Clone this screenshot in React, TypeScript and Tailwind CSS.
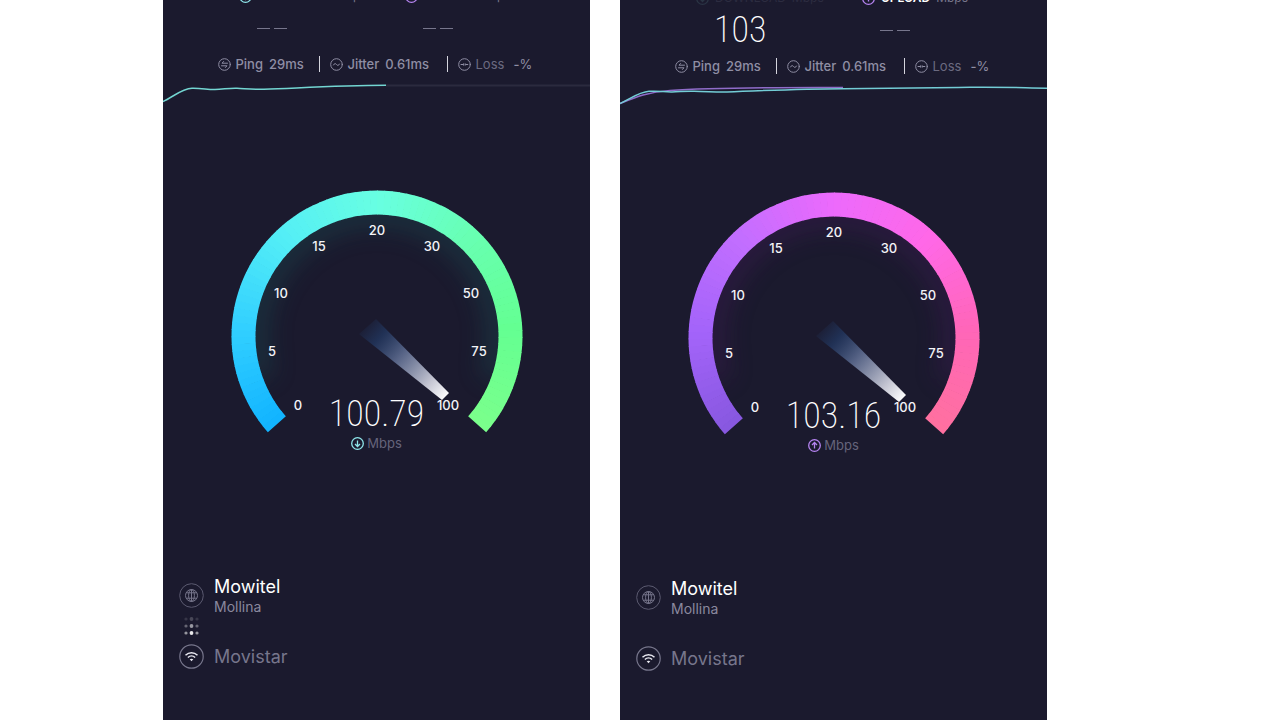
import { useId } from "react";

type Direction = "download" | "upload";

type Test = {
  direction: Direction;
  speed: string;
  download: string | null;
  colors: [number, number, number][];
  glow: string;
  accent: string;
  connecting: boolean;
};

const tests: Test[] = [
  {
    direction: "download",
    speed: "100.79",
    download: null,
    colors: [
      [18, 180, 255],
      [50, 208, 255],
      [84, 238, 246],
      [104, 255, 226],
      [104, 255, 178],
      [100, 255, 146],
      [122, 255, 140],
    ],
    glow: "#1f5a5c",
    accent: "#8fe6ea",
    connecting: true,
  },
  {
    direction: "upload",
    speed: "103.16",
    download: "103",
    colors: [
      [136, 88, 224],
      [164, 100, 250],
      [194, 110, 255],
      [236, 106, 252],
      [255, 104, 232],
      [255, 102, 184],
      [255, 112, 160],
    ],
    glow: "#4c1c62",
    accent: "#b583f0",
    connecting: false,
  },
];

const ticks = [
  { label: "0", x: 76, y: 225 },
  { label: "5", x: 50, y: 171 },
  { label: "10", x: 59, y: 113 },
  { label: "15", x: 97, y: 66 },
  { label: "20", x: 155, y: 50 },
  { label: "30", x: 210, y: 66 },
  { label: "50", x: 249, y: 113 },
  { label: "75", x: 257, y: 171 },
  { label: "100", x: 226, y: 225 },
];

const CX = 155;
const CY = 156;
const START = -131.4;
const SWEEP = 262.8;
const SEGMENTS = 90;

// angle is measured clockwise from twelve o'clock
function point(angle: number, r: number) {
  const rad = (angle * Math.PI) / 180;
  return `${(CX + r * Math.sin(rad)).toFixed(2)} ${(CY - r * Math.cos(rad)).toFixed(2)}`;
}

function arc(from: number, to: number, r: number) {
  const large = to - from > 180 ? 1 : 0;
  return `M${point(from, r)}A${r} ${r} 0 ${large} 1 ${point(to, r)}`;
}

function mix(colors: [number, number, number][], t: number) {
  const pos = t * (colors.length - 1);
  const i = Math.min(Math.floor(pos), colors.length - 2);
  const c = colors[i].map((v, k) => Math.round(v + (colors[i + 1][k] - v) * (pos - i)));
  return `rgb(${c.join(",")})`;
}

function ArrowIcon({ direction, color }: { direction: Direction; color: string }) {
  return (
    <svg width="13" height="13" viewBox="0 0 13 13" fill="none" stroke={color} strokeWidth="1.3">
      <circle cx="6.5" cy="6.5" r="5.8" />
      <path d={direction === "download" ? "M6.5 3.5v6M4 7l2.5 2.5L9 7" : "M6.5 9.5v-6M4 6l2.5-2.5L9 6"} />
    </svg>
  );
}

function StatIcon({ d }: { d: string }) {
  return (
    <svg className="shrink-0" width="13" height="13" viewBox="0 0 13 13" fill="none" stroke="currentColor" strokeLinecap="round" strokeLinejoin="round">
      <circle cx="6.5" cy="6.5" r="5.8" />
      <path d={d} />
    </svg>
  );
}

function Dashes() {
  return (
    <div className="flex h-full items-center gap-1">
      <span className="h-px w-[13px] bg-[#77768c]" />
      <span className="h-px w-[13px] bg-[#77768c]" />
    </div>
  );
}

function Results({ test }: { test: Test }) {
  const upload = test.direction === "upload";
  return (
    <div className={upload ? "-mt-2 flex justify-center" : "-mt-2.5 flex justify-center"}>
      <div className="w-[166px]">
        <div className="flex h-3 items-center gap-1.5 whitespace-nowrap text-xs leading-3">
          <ArrowIcon direction="download" color={upload ? "#2a3444" : "#8fe6ea"} />
          <span className={upload ? "text-[#2c2c40]" : "text-[#77768c]"}>DOWNLOAD</span>
          <span className={upload ? "text-[#2c2c40]" : "text-[#77768c]"}>Mbps</span>
        </div>
        <div className="h-[52px] pl-[18px]">
          {test.download ? (
            <div className="text-4xl font-extralight leading-[52px] text-white [font-family:'Roboto_Condensed',Roboto,sans-serif]">
              {test.download}
            </div>
          ) : (
            <Dashes />
          )}
        </div>
      </div>
      <div className="w-[109px]">
        <div className="flex h-3 items-center gap-1.5 whitespace-nowrap text-xs leading-3">
          <ArrowIcon direction="upload" color="#b583f0" />
          <span className={upload ? "font-semibold text-white" : "text-[#77768c]"}>UPLOAD</span>
          <span className="text-[#77768c]">Mbps</span>
        </div>
        <div className="h-[52px] pl-[18px]">
          <Dashes />
        </div>
      </div>
    </div>
  );
}

function Stats() {
  return (
    <div className="flex h-5 items-center justify-center whitespace-nowrap text-[13px] font-medium leading-5 text-[#8f8ea4]">
      <div className="flex w-[101px] items-center gap-[5px]">
        <StatIcon d="M9.5 5.2H4l1.6-1.7M3.5 7.8H9L7.4 9.5" />
        <span>Ping</span>
        <span className="pl-px">29ms</span>
      </div>
      <span className="h-4 w-px bg-[#d5d5de]" />
      <div className="flex w-[127px] items-center gap-[5px] pl-2.5">
        <StatIcon d="M3.5 7c1-1.8 2-1.8 3-.5s2 1.3 3-.5" />
        <span>Jitter</span>
        <span className="pl-px">0.61ms</span>
      </div>
      <span className="h-4 w-px bg-[#d5d5de]" />
      <div className="flex w-[88px] items-center gap-[5px] pl-2.5">
        <StatIcon d="M3 6.5h2M7.8 6.5h2M5.6 5.8v1.4M7.2 5.8v1.4" />
        <span className="font-normal text-[#6b6a80]">Loss</span>
        <span className="pl-1">
          -<span className="font-normal">%</span>
        </span>
      </div>
    </div>
  );
}

function Graph({ direction }: { direction: Direction }) {
  return (
    <svg className="mt-1.5 block h-[30px] w-full" viewBox="0 0 427 30" preserveAspectRatio="none" fill="none" strokeWidth="1.5">
      {direction === "download" ? (
        <>
          <path d="M223 5.5H427" stroke="#2b2a3e" strokeWidth="2" />
          <path d="M0 21.5C10 17 19 8.5 29 8.3S44 9.6 52 9.5 66 8 74 8.3 90 9.5 101 9.2C140 7.8 175 5.6 223 5.3" stroke="#73d6d2" />
        </>
      ) : (
        <>
          <path d="M0 21.5C16 15 28 10 50 8.5C85 6 150 5.4 223 5.6" stroke="#8f6cc9" />
          <path d="M0 21.5C10 17 19 10 29 9.3S44 10.2 52 10 66 9 74 9.3 90 10.3 101 10C140 8.8 175 7 223 6.7S310 5.6 350 5.3S400 5.8 427 6.2" stroke="#73cdd6" />
        </>
      )}
    </svg>
  );
}

function Gauge({ test }: { test: Test }) {
  const id = useId();
  return (
    <div className="relative mx-auto mt-[70px] h-[280px] w-[310px]">
      <svg className="block h-full w-full" viewBox="0 0 310 280">
        <defs>
          <linearGradient id={`${id}needle`} gradientUnits="userSpaceOnUse" x1="141" y1="142" x2="225" y2="217">
            <stop offset="0" stopColor="#24406f" stopOpacity="0" />
            <stop offset="0.2" stopColor="#24406f" stopOpacity="0.6" />
            <stop offset="0.45" stopColor="#5e6c90" stopOpacity="0.9" />
            <stop offset="0.8" stopColor="#c4c5d2" />
            <stop offset="1" stopColor="#ffffff" />
          </linearGradient>
          <filter id={`${id}blur`} x="-20%" y="-20%" width="140%" height="140%">
            <feGaussianBlur stdDeviation="12" />
          </filter>
          <clipPath id={`${id}inner`}>
            <circle cx={CX} cy={CY} r="122" />
          </clipPath>
        </defs>
        <g clipPath={`url(#${id}inner)`}>
          <path d={arc(-110, 110, 122)} fill="none" stroke={test.glow} strokeWidth="26" opacity="0.35" filter={`url(#${id}blur)`} />
        </g>
        {Array.from({ length: SEGMENTS }, (_, i) => {
          const from = START + (i * SWEEP) / SEGMENTS;
          const to = Math.min(from + SWEEP / SEGMENTS + 0.3, START + SWEEP);
          return (
            <path key={i} d={arc(from, to, 133.5)} fill="none" stroke={mix(test.colors, i / (SEGMENTS - 1))} strokeWidth="24" />
          );
        })}
        <g fill="#f4f4f8" fontSize="13" fontWeight="500" textAnchor="middle">
          {ticks.map((tick) => (
            <text key={tick.label} x={tick.x} y={tick.y + 5}>
              {tick.label}
            </text>
          ))}
        </g>
        <path d="M137 154L154 139L227 213L220 220Z" fill={`url(#${id}needle)`} />
      </svg>
      <div className="absolute inset-x-0 top-[216px] flex flex-col items-center gap-0.5">
        <output className="text-4xl font-extralight leading-9 text-white [font-family:'Roboto_Condensed',Roboto,sans-serif]">
          {test.speed}
        </output>
        <div className="flex items-center gap-[3px] text-[13px] leading-[18px] text-[#65647b]">
          <ArrowIcon direction={test.direction} color={test.accent} />
          <span>Mbps</span>
        </div>
      </div>
    </div>
  );
}

function ConnectingDots() {
  const rows = [0.2, 0.55, 0.9];
  return (
    <svg className="block" width="25" height="27" viewBox="0 0 25 27" fill="#ffffff">
      {rows.map((opacity, r) => (
        <g key={r} opacity={opacity}>
          <circle cx="7" cy={2 + r * 7} r="1.6" opacity="0.6" />
          <circle cx="12.5" cy={2 + r * 7} r="1.9" />
          <circle cx="18" cy={2 + r * 7} r="1.6" opacity="0.6" />
        </g>
      ))}
    </svg>
  );
}

function Hosts({ connecting }: { connecting: boolean }) {
  return (
    <div className="mt-[117px] pl-4">
      <div className="flex gap-2.5">
        <svg className="mt-1.5" width="25" height="25" viewBox="0 0 25 25" fill="none" stroke="#77768c">
          <circle cx="12.5" cy="12.5" r="11.8" stroke="#5b5a70" />
          <circle cx="12.5" cy="12.5" r="6" />
          <ellipse cx="12.5" cy="12.5" rx="2.9" ry="6" />
          <path d="M12.5 6.5v12M7.3 9.8h10.4M7.3 15.2h10.4" />
        </svg>
        <div>
          <div className="text-lg leading-5 text-white">Mowitel</div>
          <div className="text-sm leading-5 text-[#8a899e]">Mollina</div>
        </div>
      </div>
      <div className="h-[27px]">{connecting && <ConnectingDots />}</div>
      <div className="flex items-center gap-2.5">
        <svg width="25" height="25" viewBox="0 0 25 25" fill="none" stroke="#e8e8f0" strokeWidth="1.5">
          <circle cx="12.5" cy="12.5" r="11.7" stroke="#77768c" strokeWidth="1.2" />
          <path d="M6.5 11.2C10 7.9 15 7.9 18.5 11.2M8.9 13.5C11 11.5 14 11.5 16.1 13.5" />
          <path d="M12.5 17.2L10.7 15.3C11.8 14.4 13.2 14.4 14.3 15.3Z" fill="#e8e8f0" stroke="none" />
        </svg>
        <div className="text-lg leading-5 text-[#77768c]">Movistar</div>
      </div>
    </div>
  );
}

function Phone({ test }: { test: Test }) {
  return (
    <section className="overflow-hidden bg-[#1b1a2e]">
      <Results test={test} />
      <Stats />
      <Graph direction={test.direction} />
      <Gauge test={test} />
      <Hosts connecting={test.connecting} />
    </section>
  );
}

export default function App() {
  return (
    <main className="grid min-h-screen grid-cols-2 gap-[30px] bg-white pl-[163px] pr-[233px] [font-family:Inter,'Open_Sans',sans-serif]">
      {tests.map((test) => (
        <Phone key={test.direction} test={test} />
      ))}
    </main>
  );
}
